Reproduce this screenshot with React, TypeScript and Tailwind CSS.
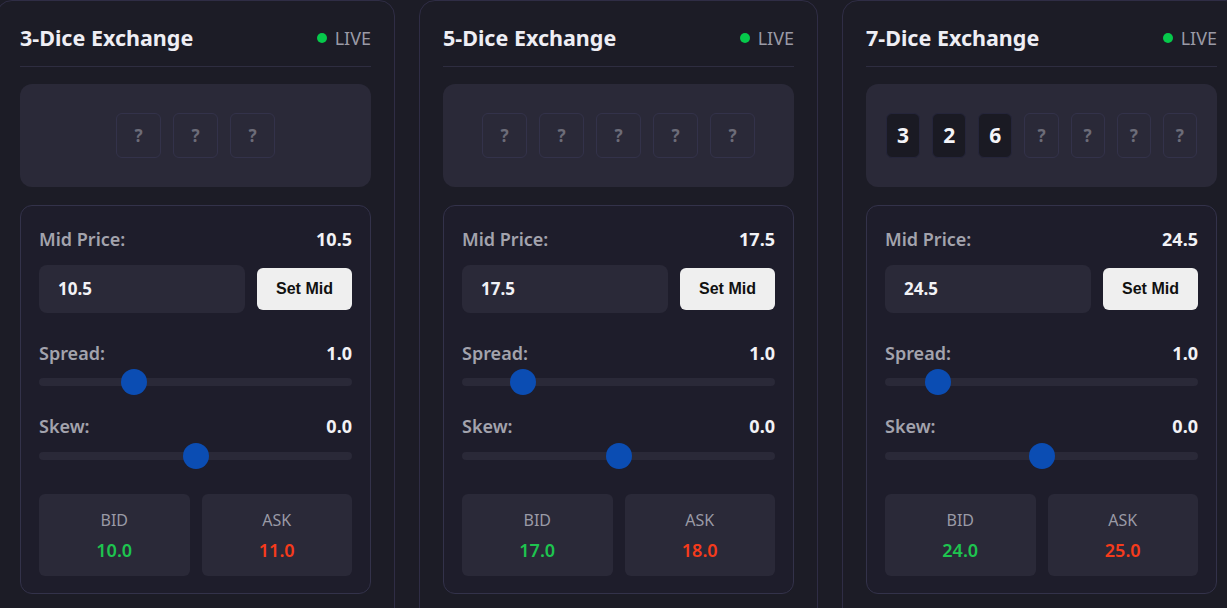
import React from 'react';

type Market = {
    id: number;
    dice: (number | null)[];
    mid: string;
    spread: string;
    skew: string;
    spreadPos: number;
    skewPos: number;
    bid: string;
    ask: string;
};

const markets: Market[] = [
    { id: 3, dice: [null, null, null], mid: '10.5', spread: '1.0', skew: '0.0', spreadPos: 0.286, skewPos: 0.5, bid: '10.0', ask: '11.0' },
    { id: 5, dice: [null, null, null, null, null], mid: '17.5', spread: '1.0', skew: '0.0', spreadPos: 0.167, skewPos: 0.5, bid: '17.0', ask: '18.0' },
    { id: 7, dice: [3, 2, 6, null, null, null, null], mid: '24.5', spread: '1.0', skew: '0.0', spreadPos: 0.138, skewPos: 0.5, bid: '24.0', ask: '25.0' },
];

const font = { fontFamily: '"Noto Sans", "Open Sans", sans-serif' };

const Slider: React.FC<{ pos: number }> = ({ pos }) => (
    <div className="relative h-[26px] flex items-center">
        <div className="h-2 w-full rounded-full bg-[#2a2938]" />
        <div
            className="absolute top-0 h-[26px] w-[26px] rounded-full bg-[#0b4db3]"
            style={{ left: `calc((100% - 26px) * ${pos})` }}
        />
    </div>
);

const Row: React.FC<{ label: string; value: string }> = ({ label, value }) => (
    <div className="flex justify-between items-center h-6 text-[18px]">
        <span className="font-semibold text-[#a3a3ad]">{label}</span>
        <span className="font-bold text-[#f2f2f6]">{value}</span>
    </div>
);

const Die: React.FC<{ value: number | null }> = ({ value }) =>
    value === null ? (
        <div className="h-[45px] w-[45px] min-w-0 shrink flex items-center justify-center rounded-md border border-[#33324a] text-[17px] font-bold text-[#6c6c78]">?</div>
    ) : (
        <div className="h-[45px] w-[45px] min-w-0 shrink flex items-center justify-center rounded-md border border-[#25253a] bg-[#1a1a23] text-[21px] font-bold text-[#f4f4f8]">{value}</div>
    );

const ExchangeCard: React.FC<{ m: Market }> = ({ m }) => (
    <div className="w-[399px] shrink-0 h-[640px] rounded-2xl border border-[#2f2d45] px-[23px] pt-[23px]">
        <header className="flex justify-between items-center h-7 pb-[14px] box-content border-b border-[#2e2d40]">
            <h2 className="text-[21.5px] font-bold text-[#eeeef4]">{m.id}-Dice Exchange</h2>
            <div className="flex items-center gap-[8px] text-[18px] text-[#9a9aa5]">
                <span className="h-[10px] w-[10px] rounded-full bg-[#06c94b]" />
                LIVE
            </div>
        </header>

        <div className="mt-[17px] rounded-xl bg-[#2a2938] px-5 py-[29px] flex justify-center gap-3">
            {m.dice.map((d, i) => <Die key={i} value={d} />)}
        </div>

        <div className="mt-[18px] rounded-xl border border-[#33324a] bg-[#1e1d2b] px-[18px] pt-[21px] pb-[17px]">
            <Row label="Mid Price:" value={m.mid} />
            <div className="mt-[14px] flex items-center gap-3">
                <div className="h-12 w-[206px] rounded-lg bg-[#2a2938] pl-[19px] flex items-center text-[17px] font-bold text-[#f2f2f6]">{m.mid}</div>
                <button
                    className="h-[42px] flex-1 rounded-md bg-[#efefef] text-[16px] font-bold text-[#111]"
                    style={{ fontFamily: '"Liberation Sans", Arial, sans-serif' }}
                >
                    Set Mid
                </button>
            </div>

            <div className="mt-7">
                <Row label="Spread:" value={m.spread} />
            </div>
            <div className="mt-1">
                <Slider pos={m.spreadPos} />
            </div>

            <div className="mt-[19px]">
                <Row label="Skew:" value={m.skew} />
            </div>
            <div className="mt-[5px]">
                <Slider pos={m.skewPos} />
            </div>

            <div className="mt-[25px] grid grid-cols-2 gap-3">
                <div className="h-[82px] rounded-md bg-[#2a2938] pt-[14px] flex flex-col items-center">
                    <span className="h-6 leading-6 text-[16px] text-[#9a9aa6]">BID</span>
                    <span className="mt-[5px] h-[26px] leading-[26px] text-[18px] font-semibold text-[#1ec44f]">{m.bid}</span>
                </div>
                <div className="h-[82px] rounded-md bg-[#2a2938] pt-[14px] flex flex-col items-center">
                    <span className="h-6 leading-6 text-[16px] text-[#9a9aa6]">ASK</span>
                    <span className="mt-[5px] h-[26px] leading-[26px] text-[18px] font-semibold text-[#f53b1c]">{m.ask}</span>
                </div>
            </div>
        </div>
    </div>
);

export default function App() {
    return (
        <div className="h-[608px] w-full overflow-hidden bg-[#1c1c26]" style={font}>
            <div className="ml-[-4px] flex gap-6">
                {markets.map(m => <ExchangeCard key={m.id} m={m} />)}
            </div>
        </div>
    );
}
